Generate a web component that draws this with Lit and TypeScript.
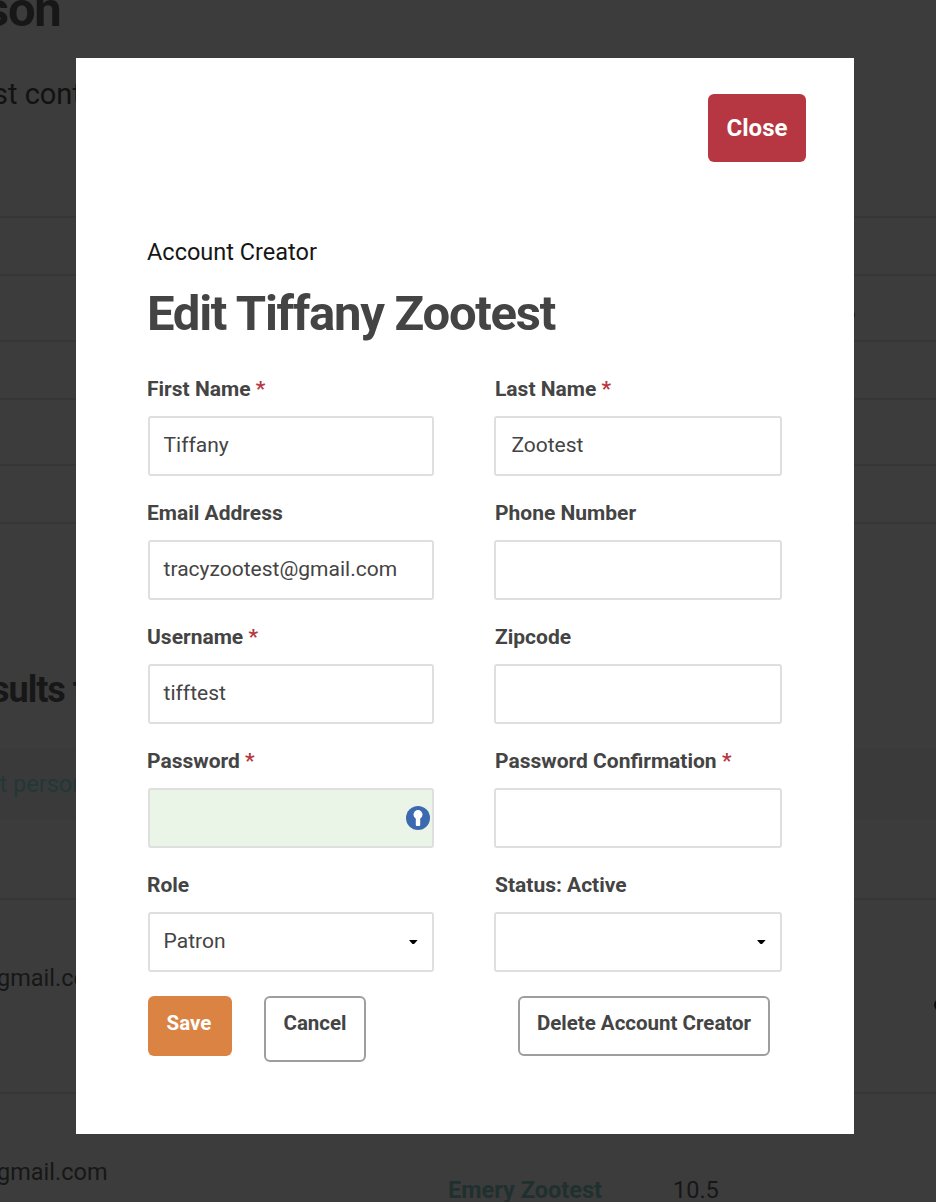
import { LitElement, html, css, svg, nothing } from "lit";
import { customElement, property } from "lit/decorators.js";
import { classMap } from "lit/directives/class-map.js";

interface Field {
  label: string;
  value?: string;
  required?: boolean;
  kind?: "text" | "password" | "select";
}

const FIELDS: Field[] = [
  { label: "First Name", value: "Tiffany", required: true },
  { label: "Last Name", value: "Zootest", required: true },
  { label: "Email Address", value: "tracyzootest@gmail.com" },
  { label: "Phone Number" },
  { label: "Username", value: "tifftest", required: true },
  { label: "Zipcode" },
  { label: "Password", required: true, kind: "password" },
  { label: "Password Confirmation", required: true },
  { label: "Role", value: "Patron", kind: "select" },
  { label: "Status: Active", kind: "select" },
];

@customElement("form-field")
class FormField extends LitElement {
  @property({ attribute: false }) field: Field = { label: "" };

  static styles = css`
    :host {
      display: block;
      height: 124px;
      color: #444;
      font-size: 21px;
    }
    .label {
      height: 34px;
      line-height: 34px;
      margin-bottom: 10px;
      padding-left: var(--label-inset, 0);
      font-weight: 700;
      white-space: nowrap;
    }
    .required {
      color: #b63742;
    }
    .control {
      box-sizing: border-box;
      height: 60px;
      margin-left: var(--box-inset, 0);
      padding: 0 14px 3px var(--text-inset, 13.6px);
      border: 2px solid #dfdfdf;
      border-radius: 3px;
      background: #fff;
      display: flex;
      align-items: center;
      justify-content: space-between;
    }
    .password {
      background: #eaf5e8;
      padding: 0 2px 0 13px;
    }
    .value {
      line-height: 26px;
    }
    .caret {
      display: block;
      width: 8.6px;
      height: 4px;
      margin-top: 2px;
    }
    .key {
      display: block;
      width: 24px;
      height: 24px;
    }
  `;

  private adornment() {
    if (this.field.kind === "select") {
      return html`<svg class="caret" viewBox="0 0 8 4" preserveAspectRatio="none">${svg`<path d="M0 0H8L5.2 3.4Q4 4.6 2.8 3.4Z" fill="#000" />`}</svg>`;
    }
    if (this.field.kind === "password") {
      return html`<svg class="key" viewBox="0 0 24 24">
        <circle cx="12" cy="12" r="12" fill="#3c69b0" />
        <circle cx="12" cy="8.6" r="4.5" fill="#fff" />
        <rect x="9.8" y="9" width="4.4" height="11" rx="1" fill="#fff" />
      </svg>`;
    }
    return nothing;
  }

  render() {
    const { label, value, required, kind } = this.field;
    return html`
      <div class="label">${label}${required ? html` <span class="required">*</span>` : nothing}</div>
      <div class=${classMap({ control: true, password: kind === "password" })}>
        <span class="value">${value ?? ""}</span>${this.adornment()}
      </div>
    `;
  }
}

@customElement("page-backdrop")
class PageBackdrop extends LitElement {
  static styles = css`
    :host {
      display: block;
      height: 1202px;
      overflow: hidden;
      background: #3c3c3c;
      color: #171717;
      white-space: nowrap;
    }
    .intro {
      display: flow-root;
      height: 216px;
      border-bottom: 2px solid #363636;
    }
    .title {
      height: 60px;
      line-height: 60px;
      margin: -20px 0 0 -16px;
      font-size: 49px;
      font-weight: 700;
      letter-spacing: -1.27px;
    }
    .lead {
      height: 40px;
      line-height: 40px;
      margin: 34px 0 0 -7px;
      font-size: 29px;
      color: #121212;
    }
    .line {
      box-sizing: border-box;
      height: 58px;
      border-bottom: 2px solid #363636;
    }
    .tall {
      height: 66px;
    }
    .detail {
      width: 855.5px;
      text-align: right;
      font-size: 18px;
      line-height: 76px;
      height: 64px;
    }
    .results {
      height: 224px;
    }
    .heading {
      padding-top: 146px;
      line-height: 40px;
      margin-left: -9px;
      font-size: 36px;
      font-weight: 700;
      letter-spacing: -1px;
    }
    .band {
      height: 72px;
      line-height: 72px;
      background: #3a3a3a;
      color: #213836;
      font-size: 23.5px;
    }
    .band-text {
      margin-left: -0.5px;
    }
    .spacer {
      height: 78px;
      border-bottom: 2px solid #363636;
    }
    .row {
      box-sizing: border-box;
      height: 194px;
      padding-top: 64px;
      display: flex;
      line-height: 28px;
      font-size: 23.5px;
      border-bottom: 2px solid #363636;
      overflow: hidden;
    }
    .email {
      flex: none;
      width: 451px;
      margin-left: -3px;
    }
    .person {
      flex: none;
      width: 225px;
      margin-top: 18px;
      font-weight: 700;
      color: #1f302f;
    }
    .person + .hours {
      margin-top: 18px;
    }
    .option {
      flex: none;
      width: 12px;
      height: 12px;
      margin: 35px 0 0 486px;
      border-radius: 50%;
      background: #0b0b0b;
    }
    .rest {
      height: 108px;
      border: 0;
    }
  `;

  render() {
    return html`
      <div class="intro">
        <div class="title">son</div>
        <div class="lead">st cont</div>
      </div>
      <div class="line"></div>
      <div class="line tall"><div class="detail">o</div></div>
      <div class="line"></div>
      <div class="line tall"></div>
      <div class="line"></div>
      <div class="results"><div class="heading">sults f</div></div>
      <div class="band"><div class="band-text">t person</div></div>
      <div class="spacer"></div>
      <div class="row">
        <div class="email">gmail.com</div>
        <div class="option"></div>
      </div>
      <div class="row rest">
        <div class="email">gmail.com</div>
        <div class="person">Emery Zootest</div>
        <div class="hours">10.5</div>
      </div>
    `;
  }
}

@customElement("app-root")
class AppRoot extends LitElement {
  static styles = css`
    :host {
      display: block;
      position: relative;
      width: 936px;
      height: 1202px;
      overflow: hidden;
      font-family: Roboto, sans-serif;
    }
    .modal {
      position: absolute;
      left: 76px;
      top: 58px;
      box-sizing: border-box;
      width: 778px;
      height: 1076px;
      padding: 36px 48px 0 71px;
      background: #fff;
      color: #444;
    }
    .top {
      display: flex;
      justify-content: flex-end;
    }
    .btn {
      box-sizing: border-box;
      border: 0;
      border-radius: 6px;
      text-align: center;
      font-size: 20.5px;
      font-weight: 700;
      line-height: 26px;
      padding-top: 14px;
      white-space: nowrap;
    }
    .close {
      width: 98px;
      height: 68px;
      padding: 0;
      line-height: 68px;
      font-size: 24px;
      color: #fff;
      background: #b63742;
    }
    .kicker {
      margin-top: 76px;
      line-height: 28px;
      font-size: 23.5px;
      color: #161616;
    }
    .name {
      margin: 18px 0 0;
      height: 60px;
      line-height: 60px;
      font-size: 49px;
      font-weight: 700;
      letter-spacing: -1.27px;
      white-space: nowrap;
    }
    .fields {
      display: grid;
      grid-template-columns: 287px 288px;
      column-gap: 60px;
      margin-top: 28px;
    }
    .left {
      --box-inset: 1px;
    }
    .right {
      --label-inset: 1px;
      --text-inset: 15.4px;
    }
    .actions {
      display: flex;
      align-items: flex-start;
      margin: 4px 0 0 1px;
    }
    .save {
      width: 84px;
      height: 60px;
      padding-right: 2px;
      color: #fff;
      background: #db8343;
    }
    .outline {
      border: 2px solid #9e9e9e;
      padding-top: 12px;
    }
    .cancel {
      width: 102px;
      height: 66px;
      margin-left: 32px;
    }
    .delete {
      width: 252px;
      height: 60px;
      margin-left: 152px;
    }
  `;

  render() {
    return html`
      <page-backdrop></page-backdrop>
      <div class="modal">
        <div class="top"><div class="btn close">Close</div></div>
        <div class="kicker">Account Creator</div>
        <h1 class="name">Edit Tiffany Zootest</h1>
        <div class="fields">
          ${FIELDS.map(
            (f, i) => html`<form-field class=${i % 2 ? "right" : "left"} .field=${f}></form-field>`
          )}
        </div>
        <div class="actions">
          <div class="btn save">Save</div>
          <div class="btn outline cancel">Cancel</div>
          <div class="btn outline delete">Delete Account Creator</div>
        </div>
      </div>
    `;
  }
}
